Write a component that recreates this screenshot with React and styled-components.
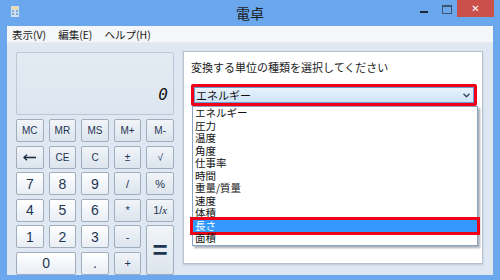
import React from 'react';
import styled, { createGlobalStyle } from 'styled-components';

const GlobalStyle = createGlobalStyle`
    html, body {
        margin: 0;
        padding: 0;
        width: 500px;
        height: 280px;
        overflow: hidden;
        background: #6aa7ec;
        font-family: 'Noto Sans CJK JP', 'Noto Sans', sans-serif;
    }
`;

const units = ['エネルギー', '圧力', '温度', '角度', '仕事率', '時間', '重量/質量', '速度', '体積', '長さ', '面積'];
const selectedUnit = '長さ';

// label, kind
const keys = [
    ['MC', 'mem'], ['MR', 'mem'], ['MS', 'mem'], ['M+', 'mem'], ['M-', 'mem'],
    ['back', 'mem'], ['CE', 'mem'], ['C', 'mem'], ['±', 'mem'], ['√', 'mem'],
    ['7', 'digit'], ['8', 'digit'], ['9', 'digit'], ['/', 'op'], ['%', 'op'],
    ['4', 'digit'], ['5', 'digit'], ['6', 'digit'], ['*', 'op'], ['1/x', 'op'],
    ['1', 'digit'], ['2', 'digit'], ['3', 'digit'], ['-', 'op'], ['=', 'equal'],
    ['0', 'zero'], ['.', 'digit'], ['+', 'op'],
];

function KeyLabel({ label }) {
    if (label === 'back') {
        return (
            <svg width="14" height="7" viewBox="0 0 14 7">
                <path d="M1 3.5 H13" stroke="#1e2f45" strokeWidth="1.6" />
                <path d="M4 0.8 L1 3.5 L4 6.2" stroke="#1e2f45" strokeWidth="1.4" fill="none" />
            </svg>
        );
    }
    if (label === '1/x') {
        return (
            <span>
                1/<i style={{ fontFamily: "'Liberation Serif', serif" }}>x</i>
            </span>
        );
    }
    return label;
}

export default function App() {
    return (
        <Window>
            <GlobalStyle />
            <TitleBar>
                <AppIcon>
                    <svg width="8" height="11" viewBox="0 0 8 11">
                        <rect x="0" y="0" width="8" height="11" fill="#cfe0ef" />
                        <rect x="1" y="1" width="6" height="2" fill="#f6d98a" />
                        <rect x="1" y="4" width="2" height="2" fill="#7fa9d2" />
                        <rect x="5" y="4" width="2" height="2" fill="#7fa9d2" />
                        <rect x="1" y="7" width="2" height="2" fill="#7fa9d2" />
                        <rect x="5" y="7" width="2" height="2" fill="#7fa9d2" />
                    </svg>
                </AppIcon>
                <Title>電卓</Title>
                <Controls>
                    <MinButton />
                    <MaxButton />
                    <CloseButton>✕</CloseButton>
                </Controls>
            </TitleBar>
            <Client>
                <MenuBar>
                    <MenuItem>表示(V)</MenuItem>
                    <MenuItem>編集(E)</MenuItem>
                    <MenuItem>ヘルプ(H)</MenuItem>
                </MenuBar>
                <Body>
                    <Calculator>
                        <Display>0</Display>
                        <Keypad>
                            {keys.map(([label, kind]) => (
                                <Key key={label} kind={kind}>
                                    <KeyLabel label={label} />
                                </Key>
                            ))}
                        </Keypad>
                    </Calculator>
                    <ConverterPanel>
                        <Prompt>変換する単位の種類を選択してください</Prompt>
                        <SelectFrame>
                            <Select>
                                <span>エネルギー</span>
                                <svg width="7" height="5" viewBox="0 0 7 5">
                                    <path d="M0.5 0.8 L3.5 3.8 L6.5 0.8" stroke="#3b4b5c" strokeWidth="1.4" fill="none" />
                                </svg>
                            </Select>
                        </SelectFrame>
                        <DropList>
                            {units.map((u) => (
                                <Option key={u} selected={u === selectedUnit}>
                                    {u}
                                </Option>
                            ))}
                        </DropList>
                    </ConverterPanel>
                </Body>
            </Client>
        </Window>
    );
}

const Window = styled.div`
    width: 500px;
    height: 280px;
    box-sizing: border-box;
    padding: 0 7px 8px 7px;
    display: flex;
    flex-direction: column;
    background: #6aa7ec;
`;

const TitleBar = styled.div`
    height: 26px;
    position: relative;
    display: flex;
    align-items: center;
    margin: 0 -7px;
`;

const AppIcon = styled.div`
    position: absolute;
    left: 11px;
    top: 6px;
    line-height: 0;
`;

const Title = styled.div`
    flex: 1;
    text-align: center;
    font-size: 14px;
    color: #1a1a1a;
    line-height: 26px;
`;

const Controls = styled.div`
    position: absolute;
    right: 6px;
    top: 0;
    display: flex;
    align-items: flex-start;
`;

const MinButton = styled.div`
    width: 8px;
    height: 2px;
    background: #1d2733;
    margin: 11px 14px 0 0;
`;

const MaxButton = styled.div`
    width: 8px;
    height: 6px;
    border: 1px solid #3b5572;
    border-top-width: 2px;
    margin: 5px 5px 0 0;
`;

const CloseButton = styled.div`
    width: 37px;
    height: 17px;
    background: #c9504b;
    color: #fff;
    font-size: 10px;
    font-weight: bold;
    font-family: 'DejaVu Sans', sans-serif;
    display: flex;
    align-items: center;
    justify-content: center;
`;

const Client = styled.div`
    flex: 1;
    display: flex;
    flex-direction: column;
    background: #dfe8f2;
`;

const MenuBar = styled.div`
    height: 15px;
    display: flex;
    align-items: center;
    gap: 12px;
    padding: 1px 0 0 5px;
    background: #f4f6f9;
    border-bottom: 1px solid #e6ebf1;
`;

const MenuItem = styled.span`
    font-size: 10.5px;
    color: #1a1a1a;
    line-height: 15px;
`;

const Body = styled.div`
    display: flex;
    padding: 8px 0 0 9px;
    gap: 9px;
`;

const Calculator = styled.div`
    width: 158px;
    display: flex;
    flex-direction: column;
    gap: 4px;
    padding-top: 1px;
`;

const Display = styled.div`
    height: 50px;
    border: 1px solid #bcc8d5;
    border-radius: 2px;
    background: linear-gradient(#e3eaf2, #dde6ef);
    display: flex;
    align-items: flex-end;
    justify-content: flex-end;
    padding: 0 5px 11px 0;
    font-family: 'DejaVu Sans Mono', monospace;
    font-style: italic;
    font-size: 16px;
    line-height: 16px;
    color: #111;
`;

const Keypad = styled.div`
    display: grid;
    grid-template-columns: repeat(5, 1fr);
    grid-auto-rows: 23px;
    column-gap: 5px;
    row-gap: 3.6px;
`;

const Key = styled.div`
    box-sizing: border-box;
    border: 1px solid #9fadbc;
    border-radius: 2px;
    display: flex;
    align-items: center;
    justify-content: center;
    color: #1e3552;
    font-family: 'Liberation Sans', 'Noto Sans CJK JP', sans-serif;
    font-size: ${(p) => (p.kind === 'mem' ? '10px' : p.kind === 'op' ? '11px' : '14px')};
    background: ${(p) =>
        p.kind === 'digit' || p.kind === 'zero'
            ? 'linear-gradient(#ffffff, #f3f6fa 50%, #e9eef5)'
            : 'linear-gradient(#f2f5f9, #e6ecf3 50%, #dce4ed)'};
    grid-column: ${(p) => (p.kind === 'zero' ? 'span 2' : 'auto')};
    grid-row: ${(p) => (p.kind === 'equal' ? 'span 2' : 'auto')};
    ${(p) => p.kind === 'equal' && 'font-size: 26px; font-weight: bold; color: #1e3552;'}
`;

const ConverterPanel = styled.div`
    width: 300px;
    height: 213px;
    box-sizing: border-box;
    background: #fff;
    border: 1px solid #b7c2ce;
    box-shadow: 0 1px 2px rgba(80, 100, 130, 0.25);
    padding: 8px 6px 0 7px;
    display: flex;
    flex-direction: column;
`;

const Prompt = styled.div`
    font-size: 11px;
    color: #222;
    line-height: 15px;
    margin-bottom: 9px;
`;

const SelectFrame = styled.div`
    width: 286px;
    height: 22px;
    box-sizing: border-box;
    border: 3px solid #f00016;
    border-radius: 2px;
`;

const Select = styled.div`
    height: 100%;
    box-sizing: border-box;
    border: 1px solid #6c9bd0;
    background: linear-gradient(#e8f2fc, #cfe3f8);
    display: flex;
    align-items: center;
    justify-content: space-between;
    padding: 0 3px 0 1px;
    font-size: 11px;
    color: #111;
`;

const DropList = styled.div`
    width: 286px;
    box-sizing: border-box;
    margin-left: 1px;
    border: 1px solid #8aa4c3;
    background: #fff;
    box-shadow: 2px 2px 2px rgba(60, 70, 90, 0.45);
`;

const Option = styled.div`
    height: 12.5px;
    line-height: 12.5px;
    font-size: 10.5px;
    padding-left: 2px;
    color: ${(p) => (p.selected ? '#fff' : '#111')};
    background: ${(p) => (p.selected ? '#3399ff' : 'transparent')};
    outline: ${(p) => (p.selected ? '3px solid #f00016' : 'none')};
    position: relative;
`;
